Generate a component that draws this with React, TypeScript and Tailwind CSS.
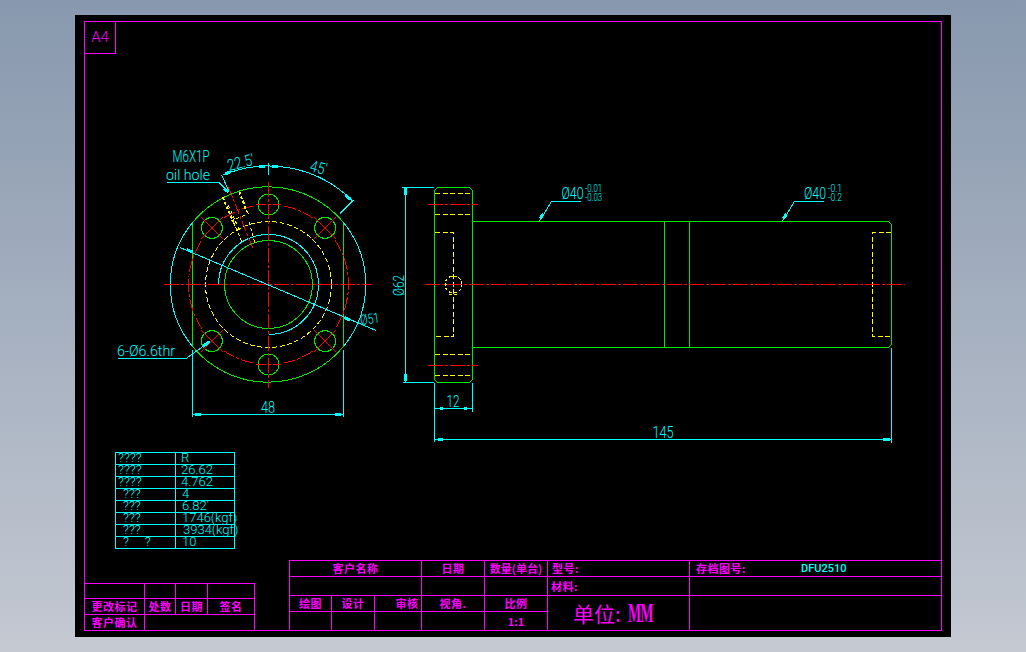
const CAD = "font-['Roboto','Liberation_Sans',sans-serif] font-light";
const HAN = "font-['Noto_Sans_CJK_SC',sans-serif] font-bold text-[11px] leading-none text-[#ff00ff] tracking-[0.5px] whitespace-nowrap";

const params: [string, string, string, string][] = [
  ['????', 'R', 'pl-[2px]', 'pl-[5px]'],
  ['????', '26.62', 'pl-[2px]', 'pl-[5px]'],
  ['????', '4.762', 'pl-[2px]', 'pl-[5px]'],
  ['???', '4', 'pl-[7px]', 'pl-[6px]'],
  ['???', "6.82'", 'pl-[7px]', 'pl-[6px]'],
  ['???', '1746(kgf)', 'pl-[7px]', 'pl-[6px]'],
  ['???', '3934(kgf)', 'pl-[7px]', 'pl-[7px]'],
  ['?     ?', '10', 'pl-[7px]', 'pl-[6px]'],
];

const bolts = [
  [211.9, 227.9],
  [325.1, 227.9],
  [211.9, 341.1],
  [325.1, 341.1],
];

// bolt circle pieces between the holes, degrees clockwise from the top
const boltArcs = [
  [11, 34],
  [56, 124],
  [146, 169],
  [191, 214],
  [236, 304],
  [326, 349],
];

const polar = (deg: number) => {
  const a = (deg * Math.PI) / 180;
  return `${268.5 + 80 * Math.sin(a)} ${284.5 - 80 * Math.cos(a)}`;
};

function Cell({ children, className = '' }: { children?: React.ReactNode; className?: string }) {
  return <div className={`flex items-center justify-center bg-black ${HAN} ${className}`}>{children}</div>;
}

function Label({
  x,
  y,
  size,
  w,
  children,
  rotate,
}: {
  x: number;
  y: number;
  size: number;
  w: number;
  children: string;
  rotate?: number;
}) {
  return (
    <text
      x={x}
      y={y}
      fontSize={size}
      textLength={w}
      lengthAdjust="spacingAndGlyphs"
      fill="#00ffff"
      transform={rotate ? `rotate(${rotate} ${x} ${y})` : undefined}
    >
      {children}
    </text>
  );
}

function Drawing() {
  const CENTER = '15 2 3 2';
  const HIDDEN = '5 2.5';
  return (
    <svg
      viewBox="85 22 856 608"
      shapeRendering="crispEdges"
      fill="none"
      className={`absolute left-0 top-0 h-[608px] w-[856px] ${CAD}`}
    >
      {/* front view */}
      <g stroke="#00e800">
        <path d="M192.5 222.5 A97.7 97.7 0 0 1 343.5 222.5" />
        <path d="M192.5 346.5 A97.7 97.7 0 0 0 343.5 346.5" />
        <path d="M192.5 222.5 V346.5 M343.5 222.5 V346.5" />
        <circle cx="268.5" cy="284.5" r="44" />
        <circle cx="268.5" cy="204.5" r="10.5" />
        <circle cx="268.5" cy="364.5" r="10.5" />
        {bolts.map(([x, y]) => (
          <circle key={`${x}-${y}`} cx={x} cy={y} r="10.5" />
        ))}
      </g>
      <g stroke="#00ffff">
        <path d="M192.5 222.5 A97.7 97.7 0 0 0 192.5 346.5" />
        <path d="M343.5 222.5 A97.7 97.7 0 0 1 343.5 346.5" />
        <path d="M218.5 284.5 A50 50 0 1 1 268.5 334.5" />
      </g>
      <circle cx="268.5" cy="284.5" r="63" stroke="#ffff00" strokeDasharray={HIDDEN} />
      <g stroke="#ff0000">
        {boltArcs.map(([from, to]) => (
          <path key={from} d={`M${polar(from)} A80 80 0 0 1 ${polar(to)}`} strokeDasharray="13 2 3 2" />
        ))}
        <path d="M164 284.5 H372" strokeDasharray={CENTER} />
        <path d="M268.5 182 V388" strokeDasharray={CENTER} />
        <path d="M256 204.5 H281 M256 364.5 H281" strokeDasharray="10 2 3 2" />
        {bolts.map(([x, y]) => (
          <path key={`${x}+${y}`} d={`M${x - 11} ${y - 11} L${x + 11} ${y + 11} M${x - 11} ${y + 11} L${x + 11} ${y - 11}`} />
        ))}
        <path d="M228.5 187.5 L253.5 250" strokeDasharray="11 2 3 2" />
      </g>

      {/* oil hole */}
      <g stroke="#ffff00">
        <path d="M222.7 197.3 L233.3 221.7 M239.3 191.7 L246.7 211.7" strokeWidth="2" strokeDasharray="3 2" />
        <path d="M233.3 221.7 L241.7 241.7 M249 221.7 L255 243.3" strokeDasharray="4 2" />
        <path d="M228.3 205 L239.3 230 M243.3 200 L248.3 214 M231 221 L248 214" strokeDasharray="3 3" />
      </g>

      {/* front view dimensions */}
      <g stroke="#00ffff">
        <path d="M180 247.5 L376 330.5" />
        <path d="M117.5 358.5 H186 L210 341.5" />
        <path d="M192.5 350 V417 M343.5 350 V417 M192.5 414.5 H343.5" />
        <path d="M166.5 182.5 H219 L228.5 192" />
        <path d="M223.2 175 A118.5 118.5 0 0 1 352.3 200.7" />
        <path d="M268.5 163 V175 M353.5 200 L340 213.5 M221.7 175 L228.3 190" />
        <g strokeWidth="3">
          <path d="M186.7 249.5 L192.3 252 M344.3 317.5 L350 320" />
          <path d="M203.3 346 L209.3 341.7" />
          <path d="M195 414.5 H201 M335 414.5 H341" />
          <path d="M224 188.7 L228.3 191.7" />
          <path d="M259 166.5 H265 M272 166.5 H278 M345 195 L350.7 199.3 M225 174 L230.7 171.7" />
        </g>
      </g>
      <Label x={172.5} y={162} size={16} w={37}>M6X1P</Label>
      <Label x={166} y={180} size={15} w={44}>oil hole</Label>
      <Label x={229} y={171} size={16} w={27} rotate={-14}>22.5'</Label>
      <Label x={309} y={171} size={16} w={17} rotate={14}>45'</Label>
      <Label x={361} y={325} size={14} w={19} rotate={-8}>Ø51</Label>
      <Label x={117} y={356} size={14} w={58}>6-Ø6.6thr</Label>
      <Label x={261} y={413} size={16} w={14}>48</Label>

      {/* side view */}
      <g stroke="#00e800">
        <path d="M437.5 187.5 H469.5 L472.5 190.5 V379.5 L469.5 382.5 H437.5 L434.5 379.5 V190.5 Z" />
        <path d="M472.5 221.5 H888.5 L891.5 224.5 V344.5 L888.5 347.5 H472.5" />
        <path d="M664.5 221.5 V347.5 M689.5 221.5 V347.5" />
      </g>
      <g stroke="#ffff00" strokeDasharray={HIDDEN}>
        <path d="M435 193.5 H472 M435 214.5 H472 M435 354.5 H472 M435 375.5 H472" />
        <path d="M435 232.5 H453.5 V336.5 H435" />
        <path d="M891 232.5 H872.5 V336.5 H891" />
      </g>
      <g stroke="#ffff00" strokeDasharray="3 2">
        <circle cx="453.5" cy="284.5" r="8.5" />
        <path d="M450 276.5 H457 M445 284.5 H462 M449 294.5 H457" />
      </g>
      <g stroke="#ff0000">
        <path d="M425 284.5 H905" strokeDasharray={CENTER} />
        <path d="M428 204.5 H478 M428 365.5 H478" strokeDasharray={CENTER} />
      </g>

      {/* side view dimensions */}
      <g stroke="#00ffff">
        <path d="M405.5 187 V382 M402 187.5 H434 M403 382.5 H434" />
        <path d="M434.5 383 V442 M472.5 383 V412 M434.5 408.5 H472.5" />
        <path d="M434.5 439.5 H891.5 M891.5 348 V443" />
        <path d="M539.5 221 L551.5 201.5 H581" />
        <path d="M782.5 221 L794.5 201.5 H824" />
        <g strokeWidth="3">
          <path d="M405.5 188 V195 M405.5 374 V381" />
          <path d="M440 408.5 H443 M464 408.5 H467" />
          <path d="M438 439.5 H443 M883 439.5 H890" />
          <path d="M540.3 218.3 L543.3 214 M783.3 218.3 L786.7 214" />
        </g>
      </g>
      <Label x={404} y={296} size={14} w={21} rotate={-90}>Ø62</Label>
      <Label x={446.5} y={407} size={16} w={13}>12</Label>
      <Label x={652.5} y={438} size={16} w={21}>145</Label>
      <Label x={561.5} y={199} size={16} w={22}>Ø40</Label>
      <Label x={585} y={192} size={10} w={17}>-0.01</Label>
      <Label x={585} y={201} size={10} w={17}>-0.03</Label>
      <Label x={804} y={199} size={16} w={22}>Ø40</Label>
      <Label x={828} y={192} size={10} w={14}>-0.1</Label>
      <Label x={828} y={201} size={10} w={14}>-0.2</Label>
    </svg>
  );
}

function App() {
  return (
    <div className="flex h-screen w-full items-center justify-center bg-linear-to-b from-[#8898ae] to-[#c4c9d2]">
      <div className="box-border h-[622px] w-[876px] bg-black px-[9px] py-[6px]">
        <div className="relative box-border flex h-[610px] w-[858px] flex-col border border-[#ff00ff]">
          <Drawing />
          <div className={`flex h-[32px] w-[31px] items-center justify-center border-b border-r border-[#ff00ff] text-[15px] leading-none text-[#ff00ff] ${CAD}`}>
            A4
          </div>

          {/* thread data */}
          <div className={`relative mb-[11px] ml-[30px] mt-auto grid w-[120px] grid-cols-[59px_58px] gap-px border border-[#00ffff] bg-[#00ffff] text-[13px] leading-none text-[#00ffff] ${CAD}`}>
            {params.map(([name, value, namePad, valuePad], i) => (
              <div key={i} className="contents">
                <div className={`flex h-[11px] items-center whitespace-pre bg-black pb-[2px] ${namePad}`}>{name}</div>
                <div className={`flex h-[11px] items-center whitespace-nowrap bg-black pb-[2px] ${valuePad}`}>{value}</div>
              </div>
            ))}
          </div>

          <div className="relative flex items-end justify-between">
            {/* revisions */}
            <div className="grid grid-cols-[59px_30px_31px_46px] grid-rows-[14px_15px_15px] gap-px border-r border-t border-[#ff00ff] bg-[#ff00ff]">
              <Cell />
              <Cell />
              <Cell />
              <Cell />
              <Cell>更改标记</Cell>
              <Cell>处数</Cell>
              <Cell>日期</Cell>
              <Cell>签名</Cell>
              <Cell>客户确认</Cell>
              <Cell className="col-span-3" />
            </div>

            {/* title block */}
            <div className="grid grid-cols-[41px_42px_46px_62px_62px_141px_251px] grid-rows-[15px_18px_15px_18px] gap-px border-l border-t border-[#ff00ff] bg-[#ff00ff]">
              <Cell className="col-span-3">客户名称</Cell>
              <Cell>日期</Cell>
              <Cell className="tracking-normal">数量(单台)</Cell>
              <Cell className="justify-start pl-[4px]">型号:</Cell>
              <Cell className="justify-start pl-[6px]">
                存档图号:
                <span className={`ml-[55px] text-[11px] font-medium tracking-normal text-[#00ffff] ${CAD}`}>DFU2510</span>
              </Cell>
              <Cell className="col-span-3" />
              <Cell />
              <Cell />
              <Cell className="justify-start pl-[3px]">材料:</Cell>
              <Cell />
              <Cell>绘图</Cell>
              <Cell>设计</Cell>
              <Cell className="pl-[18px]">审核</Cell>
              <Cell>视角.</Cell>
              <Cell>比例</Cell>
              <Cell className="row-span-2 justify-start pl-[25px]">
                <span className="font-['Noto_Sans_CJK_SC',sans-serif] text-[21px] font-normal tracking-normal">单位:</span>
                <span className="ml-[7px] inline-block w-[24px] origin-left scale-x-[0.52] font-['Liberation_Serif',serif] text-[27px] font-bold tracking-[-2px]">MM</span>
              </Cell>
              <Cell className="row-span-2" />
              <Cell />
              <Cell />
              <Cell />
              <Cell />
              <Cell className="tracking-normal text-[#00ffff]">1:1</Cell>
            </div>
          </div>
        </div>
      </div>
    </div>
  );
}

export default App;
